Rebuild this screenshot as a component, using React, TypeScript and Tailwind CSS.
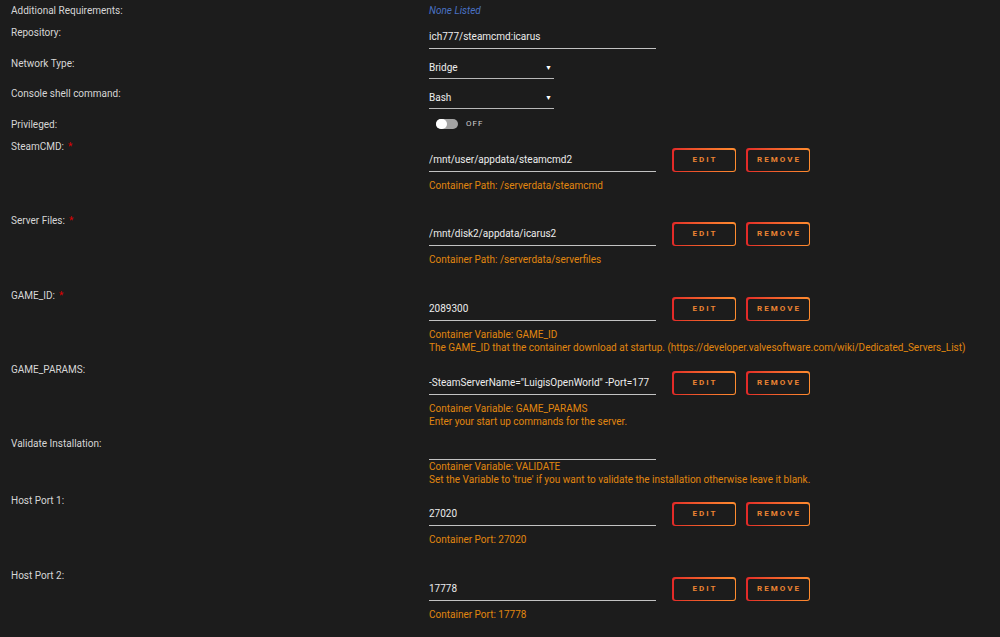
import type { ReactNode } from 'react'

const font = { fontFamily: 'Roboto, "Open Sans", sans-serif' }

function Row({ label, required, h, children }: { label: string; required?: boolean; h: string; children?: ReactNode }) {
  return (
    <div className={`flex ${h}`}>
      <div className="w-[418px] shrink-0 text-[10px] leading-[14px] text-[#d6d6d6]">
        {label}
        {required && <span className="ml-[4px] text-[#d00]">*</span>}
      </div>
      <div className="flex flex-col">{children}</div>
    </div>
  )
}

function TextInput({ value }: { value: string }) {
  return (
    <div className="h-[23px] w-[227px] overflow-hidden whitespace-nowrap border-b border-[#c2c2c2] pt-[4px] text-[10px] leading-[14px] text-[#ececec]">
      {value}
    </div>
  )
}

function Select({ value }: { value: string }) {
  return (
    <div className="flex h-[22px] w-[125px] justify-between border-b border-[#b8b8b8] pt-[4px] pr-[2px] text-[10px] leading-[14px] text-[#ececec]">
      <span>{value}</span>
      <span className="text-[7px] text-white">▼</span>
    </div>
  )
}

function GradButton({ text }: { text: string }) {
  return (
    <div className="h-[24px] w-[64px] rounded-[3px] bg-gradient-to-r from-[#e22828] to-[#ff8c2f] p-[1.5px]">
      <div className="flex h-full w-full items-center justify-center rounded-[2px] bg-[#1c1c1c] pl-[2px] text-[8px] font-bold tracking-[2px] text-[#ec8433]">
        {text}
      </div>
    </div>
  )
}

function PathField({ value, desc }: { value: string; desc: string[] }) {
  return (
    <>
      <div className="mt-[8px] flex">
        <div className="h-[24px] w-[227px] overflow-hidden whitespace-nowrap border-b border-[#c2c2c2] pt-[5px] text-[10px] leading-[14px] text-[#ececec]">
          {value}
        </div>
        <div className="ml-[16px] flex gap-[10px]">
          <GradButton text="EDIT" />
          <GradButton text="REMOVE" />
        </div>
      </div>
      <Desc lines={desc} className="mt-[7px]" />
    </>
  )
}

function Desc({ lines, className = '' }: { lines: string[]; className?: string }) {
  return (
    <div className={`text-[10px] leading-[13px] text-[#e0860f] ${className}`}>
      {lines.map((l) => (
        <div key={l} className="whitespace-nowrap">{l}</div>
      ))}
    </div>
  )
}

export default function App() {
  return (
    <div className="h-[637px] w-[1000px] overflow-hidden bg-[#1c1c1c] pl-[11px] pt-[4px]" style={font}>
      <Row label="Additional Requirements:" h="h-[22px]">
        <span className="text-[10px] italic leading-[14px] text-[#4a72c4]">None Listed</span>
      </Row>
      <Row label="Repository:" h="h-[31px]">
        <TextInput value="ich777/steamcmd:icarus" />
      </Row>
      <Row label="Network Type:" h="h-[30px]">
        <Select value="Bridge" />
      </Row>
      <Row label="Console shell command:" h="h-[31px]">
        <Select value="Bash" />
      </Row>
      <Row label="Privileged:" h="h-[22px]">
        <div className="ml-[7px] flex h-[12px] items-center">
          <div className="relative h-[10px] w-[22px] rounded-full bg-[#a4a4a4]">
            <div className="absolute left-0 top-0 h-[10px] w-[11px] rounded-full bg-white" />
          </div>
          <span className="ml-[8px] text-[8px] tracking-[1px] text-[#d0d0d0]">OFF</span>
        </div>
      </Row>
      <Row label="SteamCMD:" required h="h-[74px]">
        <PathField value="/mnt/user/appdata/steamcmd2" desc={['Container Path: /serverdata/steamcmd']} />
      </Row>
      <Row label="Server Files:" required h="h-[75px]">
        <PathField value="/mnt/disk2/appdata/icarus2" desc={['Container Path: /serverdata/serverfiles']} />
      </Row>
      <Row label="GAME_ID:" required h="h-[74px]">
        <PathField
          value="2089300"
          desc={[
            'Container Variable: GAME_ID',
            'The GAME_ID that the container download at startup. (https://developer.valvesoftware.com/wiki/Dedicated_Servers_List)',
          ]}
        />
      </Row>
      <Row label="GAME_PARAMS:" h="h-[74px]">
        <PathField
          value={'-SteamServerName="LuigisOpenWorld" -Port=177'}
          desc={['Container Variable: GAME_PARAMS', 'Enter your start up commands for the server.']}
        />
      </Row>
      <Row label="Validate Installation:" h="h-[57px]">
        <TextInput value="" />
        <Desc
          lines={[
            'Container Variable: VALIDATE',
            "Set the Variable to 'true' if you want to validate the installation otherwise leave it blank.",
          ]}
        />
      </Row>
      <Row label="Host Port 1:" h="h-[75px]">
        <PathField value="27020" desc={['Container Port: 27020']} />
      </Row>
      <Row label="Host Port 2:" h="h-[75px]">
        <PathField value="17778" desc={['Container Port: 17778']} />
      </Row>
    </div>
  )
}
